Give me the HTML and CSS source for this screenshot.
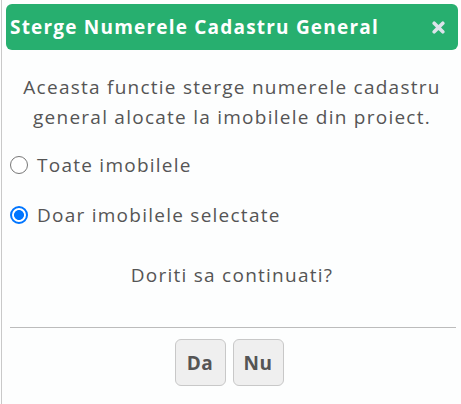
FILE: index.html
```html
<!DOCTYPE html>
<html lang="ro">
<head>
<meta charset="utf-8">
<title>Sterge Numerele Cadastru General</title>
<link rel="stylesheet" href="styles.css">
</head>
<body>
<div class="page">
  <div class="dialog">
    <div class="titlebar">
      <span class="title">Sterge Numerele Cadastru General</span>
      <button class="close" aria-label="Inchide">
        <svg width="13" height="13" viewBox="0 0 13 13"><path d="M2.2 2.2 L10.8 10.8 M10.8 2.2 L2.2 10.8" stroke="#dce3ea" stroke-width="3.6" stroke-linecap="round"/></svg>
      </button>
    </div>
    <p class="desc">Aceasta functie sterge numerele cadastru general alocate la imobilele din proiect.</p>
    <label class="opt"><input type="radio" name="sel" class="radio"><span>Toate imobilele</span></label>
    <label class="opt opt2"><input type="radio" name="sel" class="radio" checked><span>Doar imobilele selectate</span></label>
    <p class="question">Doriti sa continuati?</p>
    <div class="divider"></div>
    <div class="buttons">
      <button class="btn">Da</button>
      <button class="btn">Nu</button>
    </div>
  </div>
</div>
</body>
</html>
```
FILE: styles.css
```css
html, body {
  margin: 0;
  padding: 0;
  background: #fdfefe;
}
body {
  font-family: "Open Sans", "Liberation Sans", sans-serif;
  color: #555;
  letter-spacing: 1.25px;
}
.page {
  height: 404px;
  border-left: 1px solid #c9c9c9;
  margin-left: 1px;
  display: flex;
  overflow: hidden;
}
.dialog {
  flex: 1;
  padding: 4px 3px 0 4px;
  display: flex;
  flex-direction: column;
}
.titlebar {
  height: 46px;
  background: #27af6f;
  border-radius: 6px;
  display: flex;
  align-items: center;
  justify-content: space-between;
  padding: 0 13px 0 4px;
}
.title {
  color: #fff;
  font-weight: 700;
  font-size: 19px;
  letter-spacing: 1.2px;
}
.close {
  border: 0;
  background: none;
  padding: 0;
  margin: 0;
  width: 13px;
  height: 13px;
  display: flex;
}
.desc {
  margin: 22px 0 0;
  font-size: 19px;
  line-height: 30px;
  text-align: center;
  padding: 0 4px;
}
.opt {
  display: flex;
  align-items: center;
  height: 30px;
  margin-top: 18px;
  font-size: 19px;
}
.opt2 {
  margin-top: 20px;
}
.radio {
  -webkit-appearance: none;
  appearance: none;
  box-sizing: border-box;
  width: 18px;
  height: 18px;
  margin: 0 9px 0 4px;
  border: 1.6px solid #777;
  border-radius: 50%;
  background: #fff;
  flex: none;
}
.radio:checked {
  border: 2px solid #0075ff;
  background: radial-gradient(circle, #0075ff 0 4.6px, #fff 5.3px);
}
.question {
  margin: 30px 0 0;
  font-size: 19px;
  line-height: 30px;
  text-align: center;
}
.divider {
  margin: 37px 2px 0 4px;
  height: 1px;
  background: #bcbcbc;
}
.buttons {
  display: flex;
  justify-content: center;
  gap: 7px;
  margin-top: 11px;
  padding-right: 6px;
}
.btn {
  width: 51px;
  height: 47px;
  font-family: inherit;
  font-size: 19px;
  font-weight: 700;
  letter-spacing: 0.5px;
  color: #555;
  background: #efefef;
  border: 1px solid #c8c8c8;
  border-radius: 6px;
  padding: 0;
}
```
